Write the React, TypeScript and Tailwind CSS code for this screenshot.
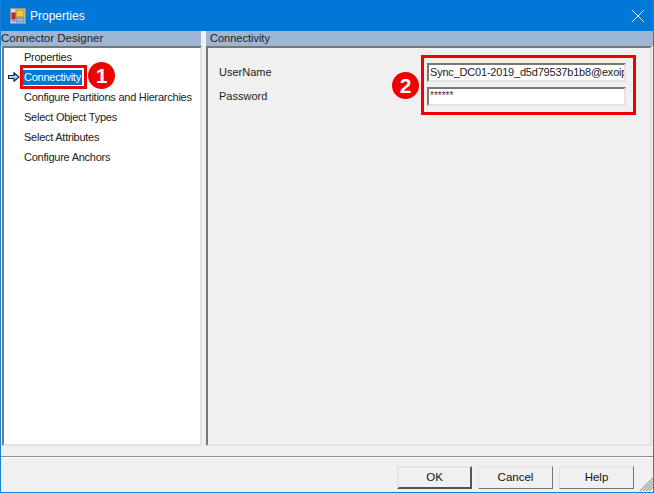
import { X } from "lucide-react";

const steps = [
  { label: "Properties", active: false },
  { label: "Connectivity", active: true },
  { label: "Configure Partitions and Hierarchies", active: false },
  { label: "Select Object Types", active: false },
  { label: "Select Attributes", active: false },
  { label: "Configure Anchors", active: false },
];

function Badge({ n, className }: { n: string; className: string }) {
  return (
    <div
      className={`absolute flex h-[27px] w-[27px] items-center justify-center rounded-full bg-[#f00000] text-[21px] font-bold leading-none text-white ${className}`}
    >
      {n}
    </div>
  );
}

function DialogButton({ label, primary }: { label: string; primary?: boolean }) {
  return (
    <div
      className={`flex h-[23px] w-[75px] items-center justify-center border border-t-[#e3e3e3] border-l-[#e3e3e3] bg-[#f0f0f0] text-[11.5px] text-[#111] ${
        primary
          ? "border-2 border-t-[#666] border-l-[#666] border-r-[#555] border-b-[#555]"
          : "border-r-[#777] border-b-[#777]"
      }`}
    >
      {label}
    </div>
  );
}

export default function App() {
  return (
    <div className="relative flex h-[493px] w-[654px] flex-col overflow-hidden border-x border-b border-[#1883d7] bg-[#f0f0f0] font-['Liberation_Sans',sans-serif] text-[11px] text-[#222]">
      {/* title bar */}
      <div className="-mx-px flex h-[31px] shrink-0 items-center bg-[#0078d7] pl-[10px] pr-[5px] text-white">
        <svg width="16" height="16" viewBox="0 0 16 16">
          <rect x="0.5" y="0.5" width="15" height="15" fill="#d8dde6" stroke="#8a8f9c" />
          <rect x="6" y="2" width="8" height="7" fill="#f5c542" stroke="#b98a1e" />
          <rect x="2" y="5" width="3" height="6" fill="#d9362b" stroke="#8c2018" />
          <rect x="6" y="10" width="8" height="4" fill="#9fb4dd" stroke="#6f83ad" />
          <rect x="2" y="12" width="3" height="2" fill="#7b9ad0" />
        </svg>
        <span className="ml-[4px] text-[12px]">Properties</span>
        <X className="ml-auto h-[22px] w-[22px]" strokeWidth={1} />
      </div>

      {/* panes */}
      <div className="flex h-[415px] shrink-0">
        <div className="flex w-[200px] shrink-0 flex-col">
          <div className="flex h-[15px] shrink-0 items-center bg-[#9db6d3] text-[11.5px] leading-none">
            Connector Designer
          </div>
          <div className="ml-px mr-[-1px] flex-1 border-2 border-t-[#777] border-l-[#777] border-r-[#e3e3e3] border-b-[#e3e3e3] bg-white">
            <div className="-mt-px">
              {steps.map((s) => (
                <div key={s.label} className="flex h-[20px] items-center whitespace-nowrap tracking-[-0.25px]">
                  <div className="flex w-[19px] shrink-0 justify-end pr-[3px]">
                    {s.active && (
                      <svg width="12" height="10" viewBox="0 0 12 10">
                        <path
                          d="M0.5 3.5H6V0.8L11 5L6 9.2V6.5H0.5Z"
                          fill="#a9d0f5"
                          stroke="#16264d"
                          strokeWidth="1.2"
                        />
                      </svg>
                    )}
                  </div>
                  <span
                    className={`px-[1px] leading-[15px] ${
                      s.active ? "bg-[#0078d7] text-white" : ""
                    }`}
                  >
                    {s.label}
                  </span>
                </div>
              ))}
            </div>
          </div>
        </div>

        <div className="flex flex-1 flex-col pl-[5px]">
          <div className="flex h-[15px] shrink-0 items-center bg-[#9db6d3] pl-[4px] leading-none">
            Connectivity
          </div>
          <div className="mr-px flex-1 border-2 border-t-[#777] border-l-[#777] border-r-[#e3e3e3] border-b-[#e3e3e3] pl-[11px] pr-[24px] pt-[12px]">
            <div className="flex h-[24px] items-center justify-between">
              <span>UserName</span>
              <div className="h-[19px] w-[199px] overflow-hidden whitespace-nowrap border-2 border-t-[#777] border-l-[#777] border-r-[#e3e3e3] border-b-[#e3e3e3] bg-white pl-[1px] leading-[15px] tracking-[-0.2px]">
                Sync_DC01-2019_d5d79537b1b8@exoip
              </div>
            </div>
            <div className="flex h-[24px] items-center justify-between">
              <span>Password</span>
              <div className="h-[19px] w-[199px] border-2 border-t-[#777] border-l-[#777] border-r-[#e3e3e3] border-b-[#e3e3e3] bg-white pl-[1px] pt-[2px] text-[10px] leading-[10px] text-[#333]">
                ******
              </div>
            </div>
          </div>
        </div>
      </div>

      {/* separator */}
      <div className="mt-[10px] h-[2px] shrink-0 border-t border-[#8f8f8f] bg-white" />

      {/* buttons */}
      <div className="flex justify-end gap-[6px] pr-[19px] pt-[8px]">
        <DialogButton label="OK" primary />
        <DialogButton label="Cancel" />
        <DialogButton label="Help" />
      </div>

      {/* size grip */}
      <svg className="absolute bottom-0 right-0" width="14" height="15" viewBox="0 0 14 15">
        <path d="M14 1L1 14M14 4L4 14M14 7L7 14M14 10L10 14" stroke="#a0a0a0" strokeWidth="1.2" />
      </svg>

      {/* annotations */}
      <div className="absolute left-[19px] top-[65px] h-[24px] w-[67px] border-[3px] border-[#f00000]" />
      <Badge n="1" className="left-[87px] top-[62px]" />
      <div className="absolute left-[420px] top-[55px] h-[60px] w-[215px] border-[3px] border-[#f00000]" />
      <Badge n="2" className="left-[391px] top-[72px]" />
    </div>
  );
}
